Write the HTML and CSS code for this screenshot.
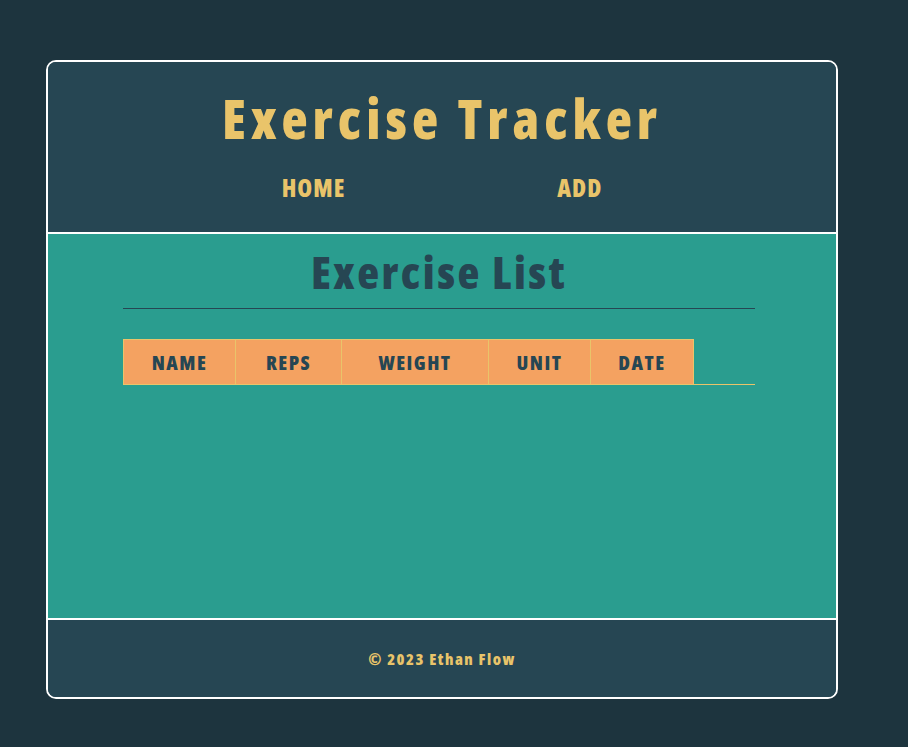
FILE: index.html
```html
<!DOCTYPE html>
<html lang="en">
<head>
<meta charset="utf-8">
<title>Exercise Tracker</title>
<link rel="stylesheet" href="styles.css">
</head>
<body>
<div class="app">
  <header class="site-header">
    <h1 class="site-title">Exercise Tracker</h1>
    <nav class="site-nav">
      <a class="nav-link" href="#">HOME</a>
      <a class="nav-link" href="#">ADD</a>
    </nav>
  </header>
  <main class="site-main">
    <h2 class="page-title">Exercise List</h2>
    <hr class="rule">
    <div class="table-wrap">
      <table class="ex-table">
        <thead>
          <tr>
            <th class="c-name">NAME</th>
            <th class="c-reps">REPS</th>
            <th class="c-weight">WEIGHT</th>
            <th class="c-unit">UNIT</th>
            <th class="c-date">DATE</th>
          </tr>
        </thead>
        <tbody></tbody>
      </table>
    </div>
  </main>
  <footer class="site-footer">
    <p class="copy">© 2023 Ethan Flow</p>
  </footer>
</div>
</body>
</html>
```
FILE: styles.css
```css
html, body {
  margin: 0;
  padding: 0;
}
body {
  background: #1d343e;
  font-family: "Open Sans", "Roboto Condensed", sans-serif;
  font-weight: 800;
  font-stretch: 75%;
}
.app {
  box-sizing: border-box;
  width: 792px;
  margin: 60px 0 0 46px;
  border: 2px solid #ffffff;
  border-radius: 10px;
  overflow: hidden;
  background: #264653;
}
.site-header {
  height: 170px;
  background: #264653;
  border-bottom: 2px solid #ffffff;
  text-align: center;
}
.site-title {
  margin: 0;
  padding-top: 26px;
  font-size: 54px;
  font-weight: 800;
  line-height: 60px;
  letter-spacing: 5px;
  color: #e9c46a;
}
.site-nav {
  display: flex;
  justify-content: center;
  gap: 212px;
  margin-top: 25px;
}
.nav-link {
  color: #e9c46a;
  text-decoration: none;
  font-size: 24px;
  line-height: 30px;
  letter-spacing: 1px;
}
.site-main {
  height: 384px;
  background: #2a9d8f;
  border-bottom: 2px solid #ffffff;
  padding: 0 81px 0 75px;
}
.page-title {
  margin: 0;
  padding-top: 12px;
  text-align: center;
  font-size: 45px;
  font-weight: 800;
  line-height: 52px;
  letter-spacing: 2.5px;
  color: #264653;
}
.rule {
  margin: 10px 0 0;
  border: 0;
  border-top: 1px solid #264653;
  height: 0;
}
.table-wrap {
  margin-top: 30px;
  border-bottom: 1px solid #e9c46a;
}
.ex-table {
  border-collapse: collapse;
}
.ex-table th {
  height: 44px;
  padding: 0;
  background: #f4a261;
  border: 1px solid #e9c46a;
  border-bottom: 0;
  color: #264653;
  font-size: 20px;
  font-weight: 800;
  letter-spacing: 1.5px;
  text-align: center;
}
.c-name { width: 111px; }
.c-reps { width: 105px; }
.c-weight { width: 146px; }
.c-unit { width: 101px; }
.c-date { width: 102px; }
.site-footer {
  height: 77px;
  background: #264653;
  display: flex;
  align-items: center;
  justify-content: center;
}
.copy {
  margin: 0;
  color: #e9c46a;
  font-size: 16px;
  letter-spacing: 1.5px;
}
```
